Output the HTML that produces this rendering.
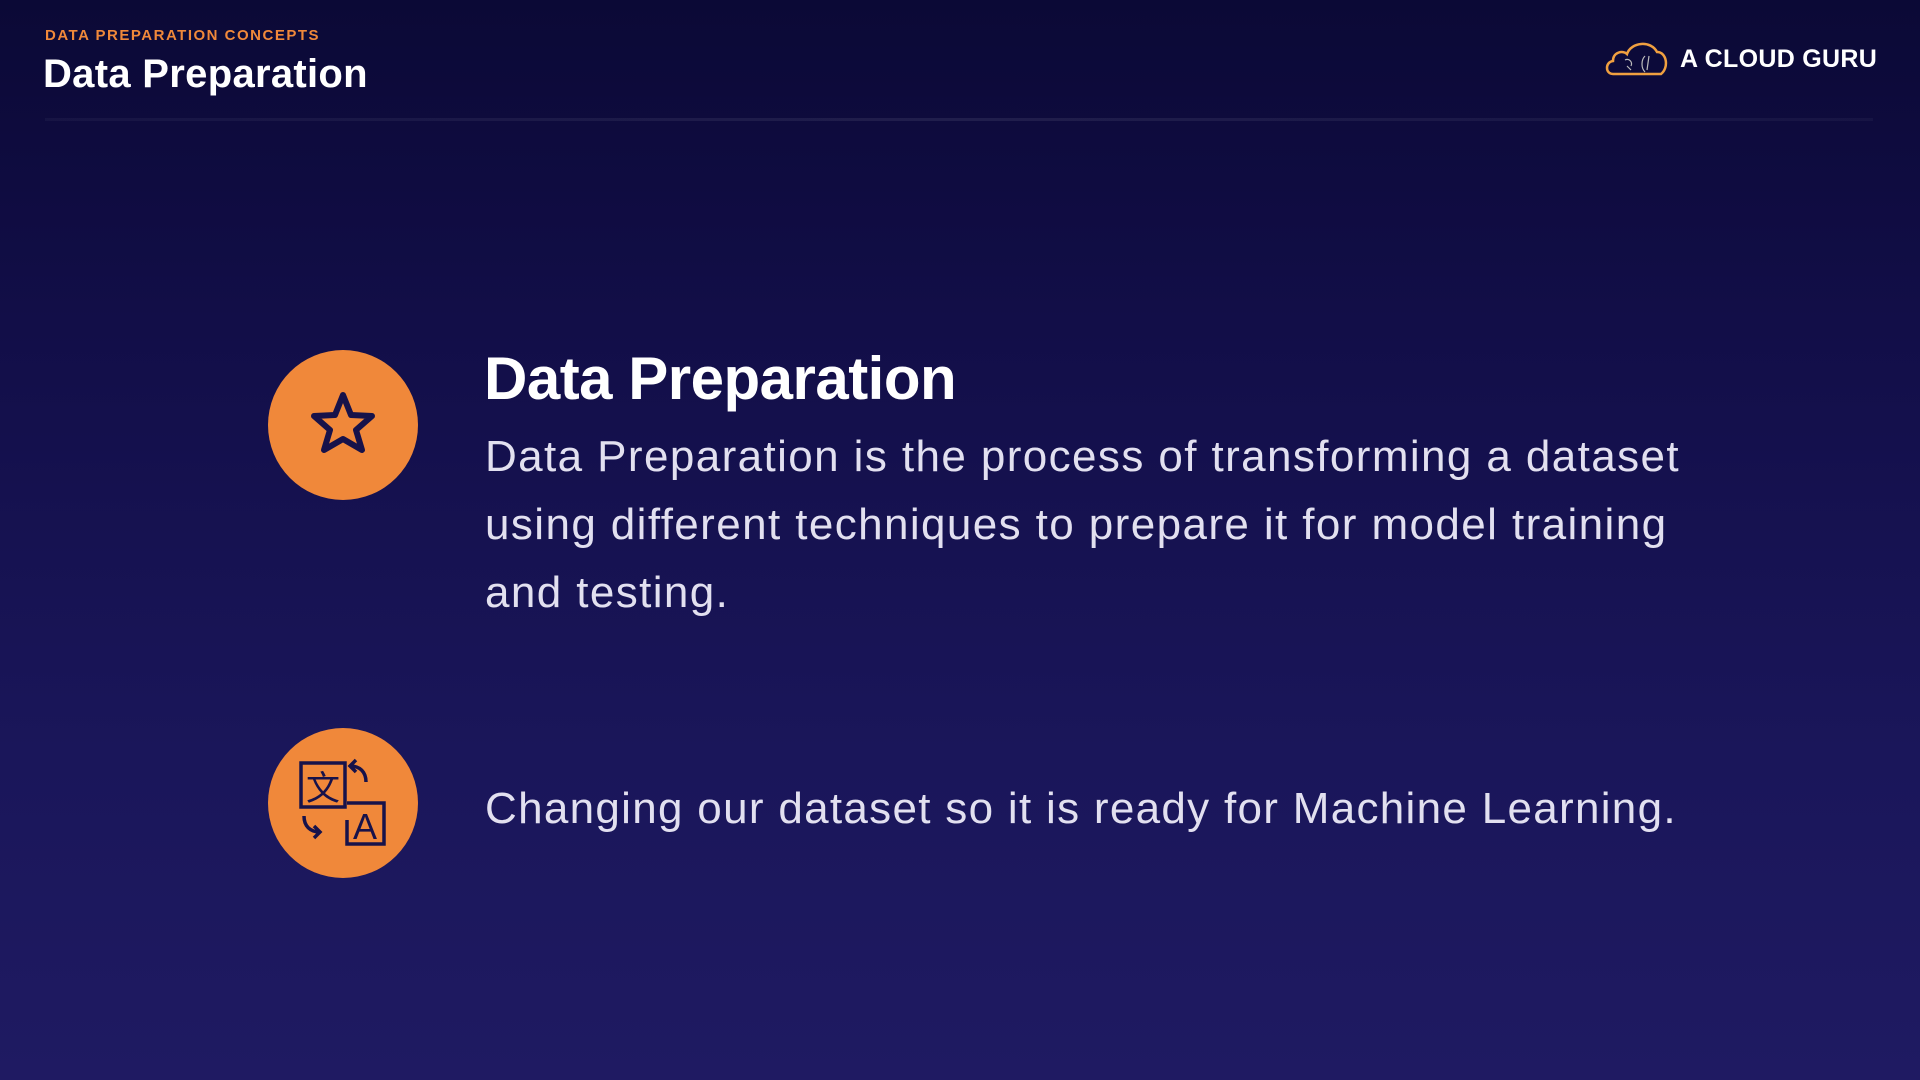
<!DOCTYPE html>
<html><head><meta charset="utf-8"><style>
html,body{margin:0;padding:0}
body{width:1920px;height:1080px;overflow:hidden;position:relative;font-family:"Liberation Sans",sans-serif;
background:linear-gradient(180deg,#0b0936 0%,#120e48 30%,#1a165a 70%,#1f1a62 100%);color:#fff}
.abs{position:absolute;white-space:nowrap}
.circ{position:absolute;width:150px;height:150px;border-radius:50%;background:#f0883a}
</style></head><body>
<div class="abs" style="left:45px;top:27px;font-size:15px;font-weight:bold;color:#f0883a;letter-spacing:1.5px">DATA PREPARATION CONCEPTS</div>
<div class="abs" style="left:43px;top:52px;font-size:40px;font-weight:bold;letter-spacing:0.3px">Data Preparation</div>
<div style="position:absolute;left:45px;top:118px;width:1828px;height:3px;background:linear-gradient(90deg,rgba(255,255,255,0.04),rgba(255,255,255,0.08),rgba(255,255,255,0.04))"></div>
<svg class="abs" style="left:1603px;top:38px" width="66" height="40" viewBox="0 0 66 40">
<path d="M10 36 C2 36 2 24 10 23 C10 14 20 12 24 16 C28 4 48 2 54 14 C64 14 66 30 58 36 Z" fill="none" stroke="#f0a040" stroke-width="2.5"/>
<path d="M22 22 c4 -2 8 2 6 6 M24 28 l4 4 M42 18 c-4 4 -4 12 0 16 M46 18 l-2 14" stroke="#bbb" stroke-width="1.2" fill="none"/>
</svg>
<div class="abs" style="left:1680px;top:45px;font-size:25px;font-weight:bold;letter-spacing:0.3px">A CLOUD GURU</div>

<div class="circ" style="left:268px;top:350px"></div>
<svg class="abs" style="left:268px;top:350px" width="150" height="150" viewBox="0 0 150 150">
<path d="M75 45 L83 65 L104 66 L88 80 L94 100 L75 89 L56 100 L62 80 L46 66 L67 65 Z" fill="none" stroke="#17124a" stroke-width="6" stroke-linejoin="round"/>
</svg>
<div class="circ" style="left:268px;top:728px"></div>
<svg class="abs" style="left:268px;top:728px" width="150" height="150" viewBox="0 0 150 150">
<g fill="none" stroke="#17124a" stroke-width="3.5">
<rect x="33" y="35" width="44" height="44"/>
<path d="M79 75 H116 V116 H79 V92"/>
<path d="M88 32 l-6 6 l6 6 M82 38 c10 0 16 6 16 16"/>
<path d="M36 88 c0 10 6 16 16 16 M46 98 l6 6 l-6 6"/>
</g>
<text x="55" y="72" font-family="Noto Sans CJK SC,sans-serif" font-size="34" fill="#17124a" text-anchor="middle">文</text>
<text x="97" y="111" font-family="Liberation Sans,sans-serif" font-size="36" fill="#17124a" text-anchor="middle">A</text>
</svg>

<div class="abs" style="left:484px;top:344px;font-size:60px;font-weight:bold;letter-spacing:-0.5px">Data Preparation</div>
<div class="abs" style="left:485px;top:423px;font-size:44px;line-height:68px;color:#e2e0f0;letter-spacing:1.4px">Data Preparation is the process of transforming a dataset<br>using different techniques to prepare it for model training<br>and testing.</div>
<div class="abs" style="left:485px;top:775px;font-size:44px;line-height:68px;color:#e2e0f0;letter-spacing:1.3px">Changing our dataset so it is ready for Machine Learning.</div>
</body></html>
